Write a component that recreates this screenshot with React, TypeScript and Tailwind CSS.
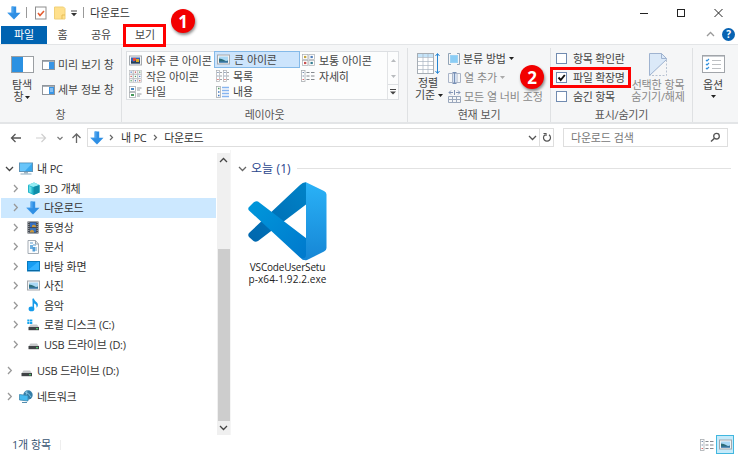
import React from "react";

type P = { children?: React.ReactNode; className?: string };

const Svg = ({ w, h, children, className = "" }: P & { w: number; h: number }) => (
  <svg width={w} height={h} viewBox={`0 0 ${w} ${h}`} className={`shrink-0 ${className}`} fill="none">
    {children}
  </svg>
);

const DownArrow = () => (
  <Svg w={14} h={14}>
    <path d="M4.6 0.5h4.6v6.2h4.3L7 13.5 0.4 6.7h4.2z" fill="#2f8fe4" />
    <path d="M4.6 0.5h2v6.8H2L7 13.5 0.4 6.7h4.2z" fill="#4ba3ef" />
  </Svg>
);
const Chevron = ({ dir = "right", color = "#9a9a9a" }: { dir?: string; color?: string }) => (
  <Svg w={9} h={9}>
    <path
      d={dir === "right" ? "M3 1l3.3 3.5L3 8" : dir === "down" ? "M1 3l3.5 3.5L8 3" : "M1 6l3.5-3.5L8 6"}
      stroke={color}
      strokeWidth="1.3"
    />
  </Svg>
);
const SmallChevron = () => (
  <Svg w={5} h={7}><path d="M1 1l2.500 2.500L1 6" stroke="#666" strokeWidth="1.200" /></Svg>
);
const Tri = ({ color = "#222" }: { color?: string }) => (
  <Svg w={5} h={3}><path d="M0 0h5L2.5 3z" fill={color} /></Svg>
);

const Photo = ({ vivid = false }: { vivid?: boolean }) => (
  <Svg w={13} h={11}>
    <rect x=".5" y="1" width="12" height="9" fill="#f4f4f4" stroke="#a3a8ad" />
    <rect x="2" y="2.5" width="9" height="6" fill={vivid ? "#3563b5" : "#a9d8f5"} />
    {vivid ? (
      <><rect x="4" y="3" width="3" height="3" fill="#e04a3f" /><path d="M2 8.500V6l3 1 3-3 3 2v2.500z" fill="#263f54" /><rect x="7" y="4" width="3" height="3" fill="#d4a928" /></>
    ) : (
      <><path d="M2 4.500q3 0 5 1.500t4 .5v2H2z" fill="#2d6d78" /><path d="M2 7.500h9v1H2z" fill="#3d78bd" /></>
    )}
  </Svg>
);
const dots = ["#5078c0", "#c85050", "#4f9d62"];
const SmallGrid = () => (
  <Svg w={13} h={13}>
    {[0, 1, 2].map((r) => [0, 1, 2].map((c) => (
      <g key={`${r}${c}`}>
        <rect x={c * 4.3 + 0.3} y={r * 4.3 + 0.3} width="3.700" height="3.700" fill="#fff" stroke="#b2b5b8" strokeWidth=".6" />
        <rect x={c * 4.3 + 1.5} y={r * 4.3 + 1.5} width="1.300" height="1.300" fill={dots[(r + c) % 3]} />
      </g>
    )))}
  </Svg>
);
const MediumGrid = () => (
  <Svg w={13} h={12}>
    {[0, 1].map((r) => [0, 1].map((c) => (
      <g key={`${r}${c}`}>
        <rect x={c * 6.5 + 0.4} y={r * 6 + 0.4} width="5.500" height="5.200" fill="#fff" stroke="#a9adb1" strokeWidth=".7" />
        <rect x={c * 6.5 + 2} y={r * 6 + 1.9} width="2.300" height="2.200" fill={["#c5a640", "#527fba", "#c85050", "#337d91"][r * 2 + c]} />
      </g>
    )))}
  </Svg>
);
const ListIcon = () => (
  <Svg w={13} h={12}>
    {[0, 7].map((x) => (
      <g key={x}>
        <rect x={x + 0.4} y=".5" width="3.200" height="11" fill="#fff" stroke="#a9adb1" strokeWidth=".7" />
        <path d={`M${x + 1.3} 2.500h1.300M${x + 1.3} 6h1.300`} stroke="#6c84a7" />
        <path d={`M${x + 1.3} 9.500h1.300`} stroke="#dc5555" />
        <path d={`M${x + 4.2} 2.500h1.600M${x + 4.2} 6h1.600M${x + 4.2} 9.500h1.600`} stroke="#8a8f95" />
      </g>
    ))}
  </Svg>
);
const DetailsIcon = () => (
  <Svg w={14} h={12}>
    <rect x=".5" y=".5" width="3.500" height="11" fill="#fff" stroke="#a9adb1" strokeWidth=".8" />
    <path d="M1.600 2.500h1.300M1.600 6h1.300" stroke="#6c84a7" />
    <path d="M1.600 9.500h1.300" stroke="#dc5555" />
    <path d="M5.500 2.500h3M10 2.500h3.500M5.500 6h3M10 6h3.500M5.500 9.500h3M10 9.500h3.500" stroke="#85898e" />
  </Svg>
);
const TileIcon = () => (
  <Svg w={13} h={12}>
    <rect x=".5" y=".5" width="6" height="5" fill="#fff" stroke="#a9adb1" strokeWidth=".8" />
    <rect x=".5" y="6.500" width="6" height="5" fill="#fff" stroke="#a9adb1" strokeWidth=".8" />
    <rect x="2" y="2" width="3" height="2" fill="#4385c5" /><rect x="2" y="8" width="3" height="2" fill="#45995a" />
    <path d="M8 2h4.500M8 4h3M8 8h4.500M8 10h3" stroke="#8a8f95" strokeWidth=".9" />
  </Svg>
);
const ContentIcon = () => (
  <Svg w={13} h={12}>
    <rect x=".5" y=".5" width="4" height="11" fill="#fff" stroke="#a9adb1" strokeWidth=".8" />
    <path d="M2 2.500h1.500" stroke="#4f9d62" strokeWidth="1.500" /><path d="M2 6h1.500M2 9.500h1.500" stroke="#4078c0" strokeWidth="1.500" />
    <path d="M6 1.500h7M6 4.500h7M6 7.500h7M6 10.500h7" stroke="#86b5f0" strokeWidth="1.500" />
  </Svg>
);

const PreviewPane = ({ full = false }: { full?: boolean }) => (
  <Svg w={13} h={10}>
    <rect x=".5" y=".5" width="12" height="9" fill="#fff" stroke="#8f959c" />
    <path d="M1 1.500h11" stroke="#a8aeb5" />
    <rect x="7" y="2" width="5" height="7" fill="#3995e5" />
    {full && <path d="M8 4h3M8 6h3" stroke="#cde7ff" />}
  </Svg>
);

const Monitor = () => (
  <Svg w={14} h={13}>
    <rect x=".5" y="1" width="13" height="8.500" fill="#38a8ee" stroke="#5f94b8" />
    <path d="M1 1.500h12L6 9H1z" fill="#68c5fa" /><path d="M5 10h4v1.500H5z" fill="#9eb4c2" /><path d="M1.500 12h11" stroke="#8caabd" />
  </Svg>
);
const Cube = () => (
  <Svg w={13} h={13}>
    <path d="M1 3l6-2.500L12.500 3v7.500L6.500 13 1 10.500z" fill="#23b5ca" />
    <path d="M1 3l6-2.500L12.500 3 6.500 5z" fill="#95edf3" /><path d="M6.500 5l6-2v7.500l-6 2.500z" fill="#0d8ea9" /><path d="M2 4l2.500 1v6L2 10z" fill="#65dce6" />
  </Svg>
);
const Film = () => (
  <Svg w={12} h={13}>
    <rect x=".5" y=".5" width="11" height="12" fill="#454a52" />
    <path d="M1.800 1v11M10.200 1v11" stroke="#b5b8bc" strokeDasharray="1 1" />
    <rect x="3" y="1.500" width="6" height="4.500" fill="#346fc2" /><rect x="3" y="7" width="6" height="4.500" fill="#3a71b8" />
    <path d="M5 4.500l2-1 2 1.500v1H5zM3 10l2-1.500 2 1.500v1.500H3z" fill="#c9973c" />
  </Svg>
);
const Doc = () => (
  <Svg w={12} h={14}>
    <path d="M1 .5h7.500L11.500 4v9.500H1z" fill="#fbfcfd" stroke="#9ba4ad" strokeWidth=".9" />
    <path d="M8.500.5V4h3" stroke="#9ba4ad" /><path d="M3 3h3M6 5h3M7 8h3M7 10h3" stroke="#5c9dcd" /><rect x="3" y="5" width="3" height="4" fill="#6eb0e0" /><rect x="5.500" y="7" width="2.500" height="4.500" fill="#519dd7" />
  </Svg>
);
const Desktop = () => (
  <Svg w={13} h={11}><rect x=".5" y=".5" width="12" height="9.500" fill="#169cf2" stroke="#087abf" /><path d="M1 9L11 1h1v8z" fill="#32b1ff" /><path d="M1 9.500h11" stroke="#0868a2" /></Svg>
);
const Music = () => (
  <Svg w={11} h={14}>
    <path d="M5.300 1v9.500" stroke="#159bea" strokeWidth="1.500" /><path d="M4.600.500h1.300c.4 3 4 3.300 4 6.300 0 1.500-.7 2.500-1.500 3 .8-3-1.200-4-3.300-4.800z" fill="#159bea" />
    <ellipse cx="3.500" cy="10.900" rx="2.900" ry="2.300" fill="#159bea" />
  </Svg>
);
const Drive = ({ win = false }: { win?: boolean }) => (
  <Svg w={13} h={12}>
    <path d="M3.500 5.500H10l2 2.800H1.500z" fill="#c7c9cb" /><rect x="1.500" y="8" width="10.500" height="3.200" fill="#404346" /><rect x="9" y="9.200" width="2" height="1" fill="#54e878" />
    {win && <path d="M.3 .5h2.200v2H.3zM3 .5h2.300v2H3zM.3 3h2.200v2H.3zM3 3h2.300v2H3z" fill="#15a5ef" />}
  </Svg>
);
const Network = () => (
  <Svg w={14} h={13}>
    <circle cx="9" cy="5" r="4.700" fill="#347da7" /><path d="M6 2q4 1 6 5M8 .5q-2 4 1 8" stroke="#86c2df" />
    <path d="M.5 4.500L9 5.500V11l-8.500-1z" fill="#45b9ef" stroke="#337ea5" strokeWidth=".7" /><path d="M3 12.500h5" stroke="#538daf" />
  </Svg>
);

const Group = ({ label, children, className = "" }: P & { label: string }) => (
  <section className={`flex shrink-0 flex-col border-r border-[#dfe1e3] ${className}`}>
    <div className="flex h-[59px]">{children}</div>
    <div className="h-[16px] text-center leading-[17px] text-[#555]">{label}</div>
  </section>
);
const Check = ({ checked = false, label }: { checked?: boolean; label: string }) => (
  <div className="flex h-[19px] items-center gap-[6px]">
    <Svg w={11} h={11}><rect x=".5" y=".5" width="10" height="10" fill="#fff" stroke="#718bb0" />{checked && <path d="M2.500 5.500l2.200 2.500L8.800 3" stroke="#111" strokeWidth="1.900" />}</Svg>
    {label}
  </div>
);
const Badge = ({ children, className = "" }: P) => (
  <div className={`absolute z-10 flex size-6 items-center justify-center rounded-full bg-[#f20000] font-['Open_Sans',sans-serif] text-[17px] font-bold text-white shadow-[1px_2px_3px_rgba(0,0,0,0.45)] ${className}`}>{children}</div>
);

const gallery: [React.ReactNode, string][] = [
  [<Photo vivid />, "아주 큰 아이콘"], [<Photo />, "큰 아이콘"], [<MediumGrid />, "보통 아이콘"],
  [<SmallGrid />, "작은 아이콘"], [<ListIcon />, "목록"], [<DetailsIcon />, "자세히"],
  [<TileIcon />, "타일"], [<ContentIcon />, "내용"],
];
const folders: [React.ReactNode, string][] = [
  [<Cube />, "3D 개체"], [<DownArrow />, "다운로드"], [<Film />, "동영상"], [<Doc />, "문서"], [<Desktop />, "바탕 화면"],
  [<Photo />, "사진"], [<Music />, "음악"], [<Drive win />, "로컬 디스크 (C:)"], [<Drive />, "USB 드라이브 (D:)"],
];

const TreeRow = ({ icon, label, child = false, open = false, selected = false }: { icon: React.ReactNode; label: string; child?: boolean; open?: boolean; selected?: boolean }) => (
  <div className={`ml-px flex h-[19.500px] items-center ${child ? "pl-[10px]" : "pl-[4px]"} ${selected ? "bg-[#cce8ff]" : ""}`}>
    <Chevron dir={open ? "down" : "right"} color={open ? "#444" : "#999"} />
    <span className={`flex w-[14px] justify-center ${child ? "ml-[6px]" : "ml-[5px]"}`}>{icon}</span>
    <span className="ml-[4px] tracking-[-0.3px]">{label}</span>
  </div>
);

export default function App() {
  return (
    <div className="relative flex h-[455px] w-[738px] flex-col overflow-hidden bg-white font-['Open_Sans','Noto_Sans_CJK_KR',sans-serif] text-[11px] leading-[13px] tracking-[-0.2px] whitespace-nowrap text-[#333] [word-spacing:0.4px]">
      <header className="flex h-[25px] shrink-0 items-center pl-[7px]">
        <DownArrow />
        <i className="ml-[5px] h-[11px] w-px bg-[#999]" />
        <Svg w={12} h={14} className="ml-[8px]"><rect x=".5" y="1" width="10.500" height="12" fill="#fff" stroke="#8d8d8d" /><path d="M3 7l2 2.500L9 5" stroke="#e45c31" strokeWidth="1.600" /></Svg>
        <Svg w={12} h={14} className="ml-[7px]"><path d="M.5 1h9l1.500 1.500V13H.5z" fill="#ffe08c" stroke="#f0d078" /><path d="M8 13V9h3" stroke="#e7bd55" /></Svg>
        <Svg w={6} h={7} className="mt-[2px] ml-[5px]"><path d="M0 1h6" stroke="#444" /><path d="M0 3h6L3 6.300z" fill="#333" /></Svg>
        <i className="ml-[6px] h-[11px] w-px bg-[#999]" />
        <span className="ml-[6px]">다운로드</span>
        <Svg w={84} h={14} className="mr-[15px] ml-auto"><path d="M1 7.500h8" stroke="#222" /><rect x="38.500" y="3.500" width="7" height="7" stroke="#222" /><path d="M75.500 3l8 8M83.500 3l-8 8" stroke="#222" /></Svg>
      </header>

      <nav className="flex h-[19px] shrink-0 items-center text-center text-[#444]">
        <div className="ml-px h-[18px] w-[46px] bg-[#0063b1] leading-[17px] text-white">파일</div>
        <div className="w-[31px]">홈</div><div className="w-[46px]">공유</div><div className="w-[42px]">보기</div>
        <div className="mr-[3px] ml-auto flex items-center gap-[7px]"><Chevron dir="up" /><div className="size-[13px] rounded-full bg-[#0863b2] text-[10px] leading-[13px] font-bold text-white">?</div></div>
      </nav>

      <div className="flex h-[80px] shrink-0 border-t border-b-2 border-[#e3e5e7] bg-[#f5f6f7] pt-[3px] text-[#444]">
        <Group label="창" className="w-[122px]">
          <div className="flex w-[34px] flex-col items-center pt-[8px] pl-[10px]">
            <Svg w={23} h={17}><rect x=".5" y=".5" width="22" height="16" fill="#fff" stroke="#9b9fa3" /><rect x="1" y="1" width="11" height="15" fill="#2b91e2" /></Svg>
            <span className="mt-[6px] leading-[12px]">탐색</span><span className="flex items-center gap-[2px] leading-[12px]">창<Tri /></span>
          </div>
          <div className="ml-[8px] flex flex-col pt-[4px]">
            <div className="flex h-[25px] items-center gap-[3px]"><PreviewPane />미리 보기 창</div>
            <div className="flex h-[25px] items-center gap-[3px]"><PreviewPane full />세부 정보 창</div>
          </div>
        </Group>
        <Group label="레이아웃" className="w-[286px]">
          <div className="mt-[3px] ml-[4px] flex h-[49px] w-[273px] border border-[#dcdfe2] bg-[#fcfdfd]">
            <div className="grid grid-cols-[87px_86px_87px] grid-rows-[16px_16px_15px]">
              {gallery.map(([icon, label], i) => (
                <div key={label} className={`flex items-center pl-[1px] ${i === 1 ? "-mt-px border border-[#84b9e8] bg-[#cce4fc] pl-0" : ""}`}>
                  <span className="flex w-[14px] justify-center">{icon}</span><span className="ml-[4px]">{label}</span>
                </div>
              ))}
            </div>
            <div className="flex w-[11px] flex-col border-l border-[#e2e4e6]">
              <div className="flex h-4 items-center justify-center"><Svg w={5} h={3}><path d="M0 3h5L2.500 0z" fill="#b8bbbe" /></Svg></div>
              <div className="flex h-4 items-center justify-center"><Tri color="#b8bbbe" /></div>
              <div className="flex h-[15px] items-center justify-center border-t border-[#dcdfe2]"><Svg w={6} h={6}><path d="M0 .5h6" stroke="#444" /><path d="M0 2.500h6L3 5.500z" fill="#444" /></Svg></div>
            </div>
          </div>
        </Group>
        <Group label="현재 보기" className="w-[143px]">
          <div className="ml-[6px] flex w-[28px] flex-col items-center pt-[4px]">
            <Svg w={23} h={23}>
              <rect x=".5" y="1.500" width="16" height="20" fill="#fff" stroke="#a6adb4" /><rect x="1" y="2" width="15" height="3" fill="#c5e4f9" />
              <path d="M6 2v19M11 2v19M1 5.500h15M1 9.500h15M1 13.500h15M1 17.500h15" stroke="#a9b5c2" strokeWidth=".7" />
              <path d="M20.500 2v19M18.500 4l2-2.500 2 2.500M18.500 19l2 2.500 2-2.500" stroke="#2585d2" />
            </Svg>
            <span className="mt-[2px] leading-[12px]">정렬</span><span className="flex items-center gap-[3px] pl-[2px] leading-[12px]">기준<Tri /></span>
          </div>
          <div className="ml-[6px] pt-px">
            <div className="flex h-[19px] items-center gap-[3px]"><Svg w={12} h={12}><path d="M3 .5H.5v11H3M9 .5h2.500v11H9" stroke="#92a4b6" /><rect x="2.500" y="2.500" width="7" height="7" fill="#8bcdf5" stroke="#9bd3f5" /></Svg>분류 방법<Tri /></div>
            <div className="flex h-[19px] items-center gap-[3px] text-[#888]"><Svg w={13} h={12}><path d="M.5 1.500h12v9H.5zM4.500 2v8M9 2v8" stroke="#a9b4c8" /><rect x="5" y="2" width="3.500" height="8" fill="#d3e0f2" /><path d="M6.500 0v12M4.500 .5h4M4.500 11.500h4" stroke="#768fb5" /></Svg>열 추가<Tri color="#aaa" /></div>
            <div className="flex h-[19px] items-center gap-[3px] text-[#888]"><Svg w={13} h={13}><path d="M1 2.500h4M8 2.500h4M3 .5l-2 2 2 2M10 .5l2 2-2 2M6.500 0v5" stroke="#8394b4" /><path d="M.5 6.500h12v6H.5zM4.500 6v6M8.500 6v6M1 9.500h11" stroke="#9ba8bd" /></Svg>모든 열 너비 조정</div>
          </div>
        </Group>
        <Group label="표시/숨기기" className="w-[142px]">
          <div className="ml-[5px] w-[71px] pt-px tracking-[-0.4px]"><Check label="항목 확인란" /><Check label="파일 확장명" checked /><Check label="숨긴 항목" /></div>
          <div className="flex w-[62px] flex-col items-center pt-[5px] text-[#888]">
            <Svg w={18} h={24}><path d="M.5 23V.5h12l5 5v1z" fill="#dbe9f8" /><path d="M.5 22.500V.5h12l5 5v1L.5 22.500M12.500.5v5h5" stroke="#9fb3d0" /><path d="M17.500 7v15.500H1" stroke="#b8c3d2" strokeDasharray="2 1.500" /></Svg>
            <span className="mt-[2px] leading-[12px]">선택한 항목</span><span className="leading-[12px]">숨기기/해제</span>
          </div>
        </Group>
        <div className="flex w-[40px] flex-col items-center pt-[7px]">
          <Svg w={23} h={18}><rect x=".5" y=".5" width="22" height="17" fill="#fff" stroke="#a1a5aa" /><path d="M1 1.500h21" stroke="#c9ccd0" /><path d="M4 5l1 1 2-2M4 9l1 1 2-2M4 13l1 1 2-2" stroke="#3290dc" strokeWidth="1.200" /><path d="M10 5.500h9M10 9.500h9M10 13.500h9" stroke="#bdc0c3" /></Svg>
          <span className="mt-[6px] mb-[4px] leading-[12px]">옵션</span><Tri />
        </div>
      </div>

      <div className="flex h-[26px] shrink-0 items-center pt-[1px]">
        <Svg w={78} h={12} className="ml-[8px]">
          <path d="M13 6H4M7.500 2L3.500 6l4 4" stroke="#555" strokeWidth="1.300" /><path d="M28 6h9M33.500 2l4 4-4 4" stroke="#cfcfcf" strokeWidth="1.200" />
          <path d="M49.500 5L52 7.500 54.500 5" stroke="#777" strokeWidth="1.200" /><path d="M68.500 11V2M64.500 6l4-4 4 4" stroke="#666" strokeWidth="1.300" />
        </Svg>
        <div className="ml-px flex h-[19px] w-[467px] items-center border border-[#dedede] pl-[2px]">
          <DownArrow /><span className="ml-[5px] flex"><SmallChevron /></span><span className="ml-[7px] tracking-[-0.4px]">내 PC</span>
          <span className="ml-[7px] flex"><SmallChevron /></span><span className="ml-[6px] tracking-[-0.4px]">다운로드</span>
          <span className="mr-[2px] ml-auto"><Chevron dir="down" color="#555" /></span>
          <div className="flex h-full w-[14px] items-center justify-center border-l border-[#dedede]"><Svg w={10} h={11}><path d="M7 2.800A3.500 3.500 0 1 1 3 2.800M1.500 1.500h2.500V4" stroke="#555" strokeWidth="1.200" /></Svg></div>
        </div>
        <div className="ml-[9px] flex h-[19px] w-[165px] items-center justify-between border border-[#dedede] pr-[6px] pl-[7px] text-[#777]">다운로드 검색<Svg w={11} h={11}><circle cx="6.500" cy="4.200" r="2.800" stroke="#555" strokeWidth="1.300" /><path d="M4.500 6.200L1 9.500" stroke="#555" strokeWidth="1.500" /></Svg></div>
      </div>

      <main className="flex h-[285px] shrink-0">
        <aside className="w-[216px] shrink-0 pt-[9px]">
          <TreeRow open icon={<Monitor />} label="내 PC" />
          {folders.map(([icon, label]) => <TreeRow key={label} child icon={icon} label={label} selected={label === "다운로드"} />)}
          <div className="mt-[7px]"><TreeRow icon={<Drive />} label="USB 드라이브 (D:)" /></div>
          <div className="mt-[6px]"><TreeRow icon={<Network />} label="네트워크" /></div>
        </aside>
        <div className="mt-[3px] ml-px flex w-[13px] flex-col items-center bg-[#f0f0f0] pt-[3px] pb-[3px]"><Chevron dir="up" color="#444" /><div className="mt-[84px] h-[172px] w-[12px] bg-[#cdcdcd]" /><span className="mt-auto"><Chevron dir="down" color="#444" /></span></div>
        <section className="flex-1 border-l border-[#f5f5f5] pl-[7px]">
          <div className="mt-[9px] flex h-[19px] items-center text-[12px] text-[#29448c]"><Chevron dir="down" color="#666" /><span className="ml-[4px] tracking-normal">오늘 (1)</span><i className="mr-[7px] ml-[6px] h-px flex-1 bg-[#e2e2e2]" /></div>
          <div className="mt-[4px] ml-[8px] flex w-[82px] flex-col items-center">
            <Svg w={79} h={79}>
              <defs><linearGradient id="dark" x1="1" y1="0" x2="0" y2="1"><stop stopColor="#0083c8" /><stop offset="1" stopColor="#0066ad" /></linearGradient><linearGradient id="wing" x1="0" y1="0" x2="1" y2="1"><stop stopColor="#0098db" /><stop offset="1" stopColor="#0078cc" /></linearGradient><linearGradient id="panel" x1="0" y1="0" x2="0" y2="1"><stop stopColor="#2ab2f7" /><stop offset="1" stopColor="#1686d5" /></linearGradient></defs>
              <path d="M58 .3V22.500L10 59Q7.500 60.500 5.500 59L1 55Q-.5 53 1 51L52 3Q55 0 58 .3z" fill="url(#dark)" />
              <path d="M10 19.500L58.500 56.500V78Q55 78.500 52 75.500L1 28.500Q-.5 26.500 1 25L5.500 20.500Q8 18.500 10 19.500z" fill="url(#wing)" />
              <path d="M58 .3L76 9Q78.500 10 78.500 12.500V66Q78.500 68 76 69.500L59 78Q56 79 53 76.500Q58 77 58 73z" fill="url(#panel)" />
            </Svg>
            <div className="pl-px text-center font-['Open_Sans',sans-serif] text-[10px] leading-[12px] tracking-[-0.2px] text-[#222]">VSCodeUserSetu<br /><span className="tracking-[0.1px]">p-x64-1.92.2.exe</span></div>
          </div>
        </section>
      </main>

      <footer className="flex h-5 shrink-0 items-center pb-px pl-[12px] text-[#385573]">
        1개 항목<i className="ml-[9px] h-[10px] w-px bg-[#eee]" />
        <span className="mr-[2px] ml-auto"><DetailsIcon /></span>
        <div className="mr-[4px] flex h-[19px] w-[18px] items-center justify-center border border-[#42b7df] bg-[#c5eafa]"><Photo /></div>
      </footer>

      <div className="absolute top-[24px] left-[123px] h-[23px] w-[43px] border-3 border-[#ff0000]" />
      <div className="absolute top-[67px] left-[550px] h-[21px] w-[81px] border-3 border-[#ff0000]" />
      <Badge className="top-[9px] left-[171px]">1</Badge>
      <Badge className="top-[65px] left-[520px]">2</Badge>
    </div>
  );
}
